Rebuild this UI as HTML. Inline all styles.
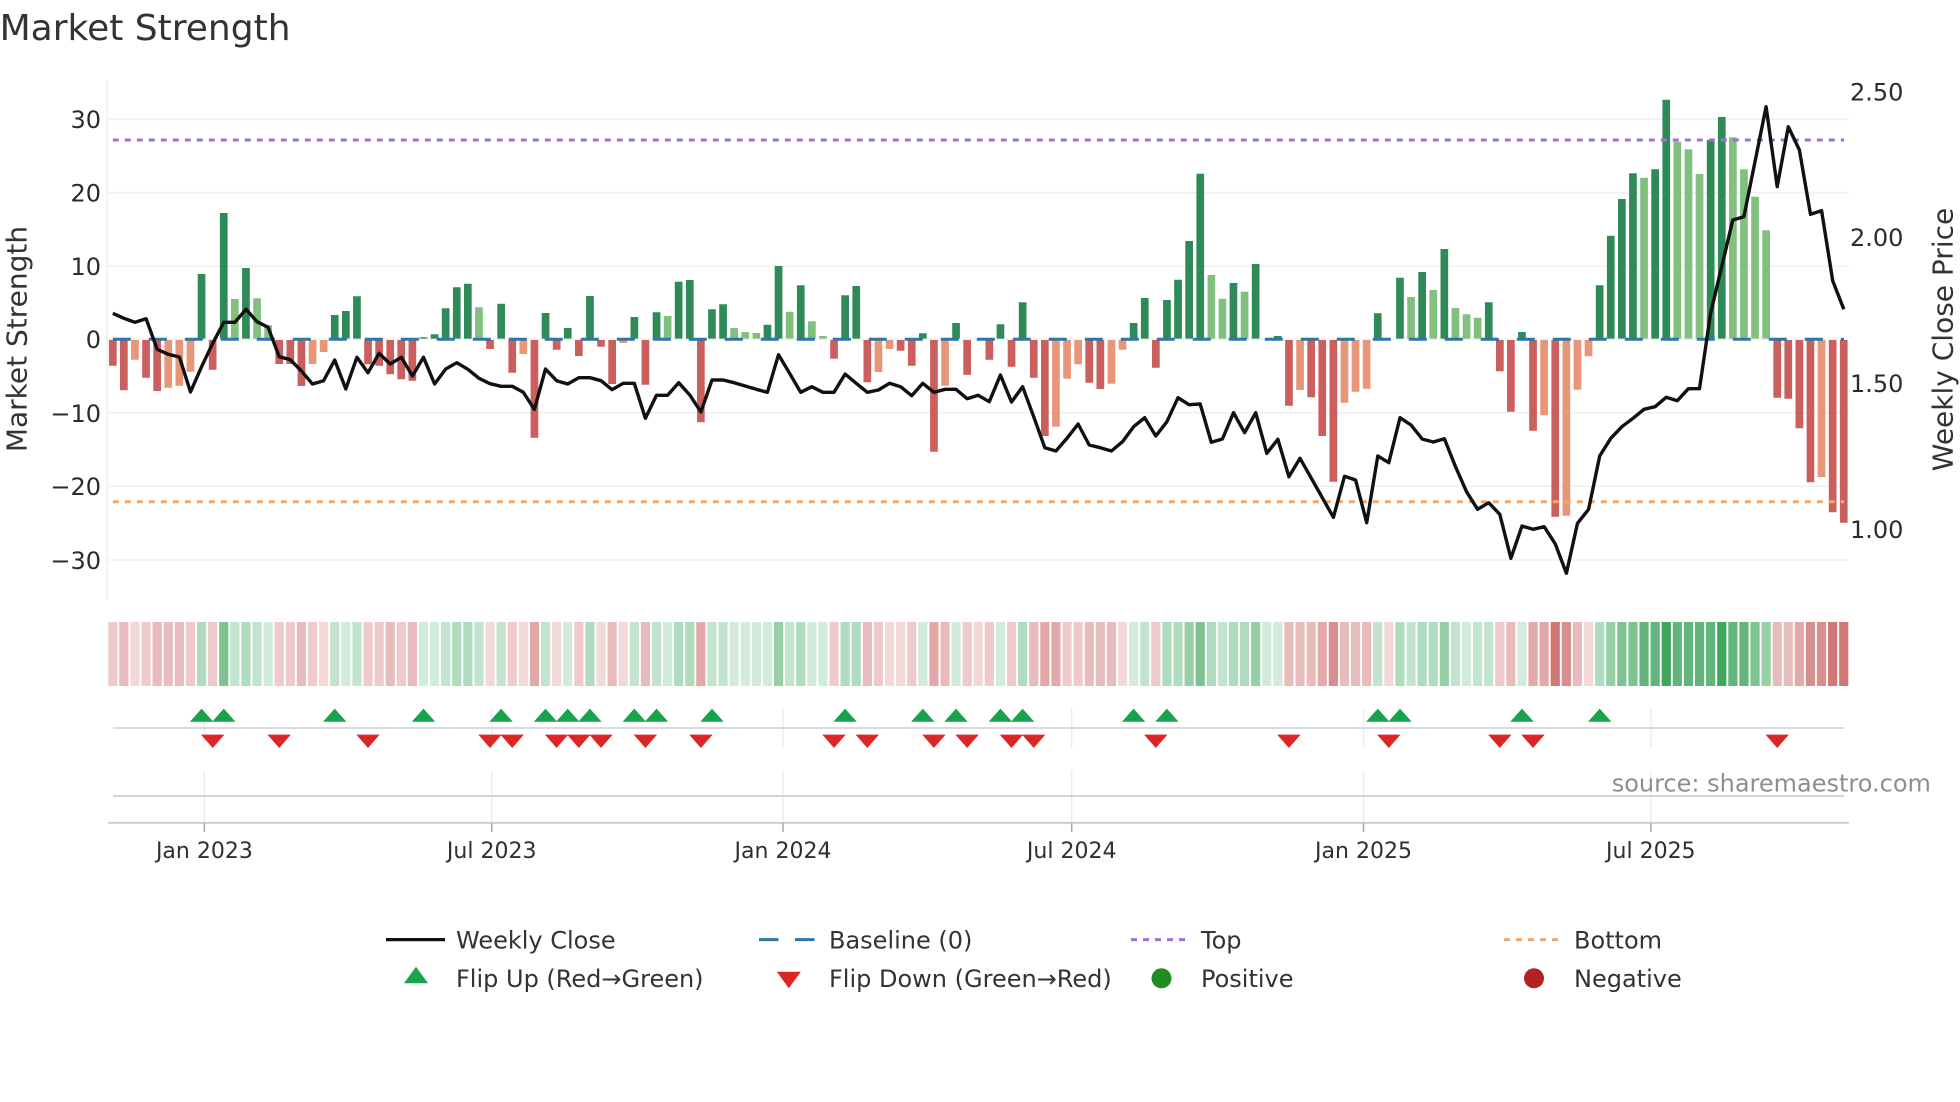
<!DOCTYPE html>
<html lang="en">
<head>
<meta charset="utf-8">
<title>Market Strength</title>
<style>
html,body{margin:0;padding:0;background:#fff;width:1960px;height:1102px;overflow:hidden}
svg{display:block}
text{font-family:"DejaVu Sans","Liberation Sans",sans-serif}
</style>
</head>
<body>
<svg xmlns="http://www.w3.org/2000/svg" width="1960" height="1102" viewBox="0 0 1960 1102">
<rect width="1960" height="1102" fill="#fff"/>

<text x="-0.4" y="40" font-size="36" fill="#333">Market Strength</text>

<!-- grid -->
<path d="M107 119.3H1849M107 192.7H1849M107 266H1849M107 339.3H1849M107 412.7H1849M107 486.3H1849M107 560H1849" stroke="#eef0f3" stroke-width="1.6" fill="none"/>
<path d="M107 80V599" stroke="#eceef1" stroke-width="1.6" fill="none"/>

<!-- y tick labels -->
<g font-size="24" fill="#2b2b2b" text-anchor="end">
<text x="101" y="128">30</text>
<text x="101" y="201.6">20</text>
<text x="101" y="275">10</text>
<text x="101" y="348">0</text>
<text x="101" y="421.8">−10</text>
<text x="101" y="495.2">−20</text>
<text x="101" y="568.8">−30</text>
</g>
<g font-size="24" fill="#2b2b2b">
<text x="1850" y="100.4">2.50</text>
<text x="1850" y="246">2.00</text>
<text x="1850" y="392">1.50</text>
<text x="1850" y="538">1.00</text>
</g>
<text transform="translate(26.5 339) rotate(-90)" font-size="28" fill="#333" text-anchor="middle">Market Strength</text>
<text transform="translate(1952.5 339.5) rotate(-90)" font-size="28" fill="#333" text-anchor="middle">Weekly Close Price</text>

<g transform="translate(3.85 0)" fill="none">
<!-- dark green bars -->
<path stroke="#2e8b57" stroke-width="7.7" d="M197.7 274V338.6M219.9 213V338.6M242.1 268V338.6M330.9 315V338.6M342 311V338.6M353.1 296.3V338.6M419.6 337.3V338.6M430.7 334.3V338.6M441.8 308.3V338.6M452.9 287.3V338.6M464 283.7V338.6M497.3 303.7V338.6M541.7 313V338.6M563.9 328V338.6M586.1 296V338.6M630.5 317V338.6M652.7 312.3V338.6M674.8 281.7V338.6M685.9 280V338.6M708.1 309.3V338.6M719.2 304.3V338.6M763.6 324.7V338.6M774.7 266V338.6M796.9 285.3V338.6M841.3 295.3V338.6M852.4 286V338.6M919 333.3V338.6M952.2 323V338.6M996.6 324.3V338.6M1018.8 302.3V338.6M1129.8 323V338.6M1140.9 298V338.6M1163.1 300V338.6M1174.2 279.7V338.6M1185.3 241V338.6M1196.4 173.7V338.6M1229.6 283V338.6M1251.8 264V338.6M1274 336V338.6M1373.9 313.3V338.6M1396.1 277.7V338.6M1418.3 272V338.6M1440.5 249V338.6M1484.9 302.3V338.6M1518.1 332V338.6M1595.8 285.3V338.6M1606.9 235.7V338.6M1618 199V338.6M1629.1 173.3V338.6M1651.3 169.3V338.6M1662.4 99.7V338.6M1706.8 140V338.6M1717.9 117V338.6"/>
<!-- light green bars -->
<path stroke="#81c07f" stroke-width="7.7" d="M231 299V338.6M253.2 298.3V338.6M264.3 325.3V338.6M475.1 307.3V338.6M663.8 316V338.6M730.3 328V338.6M741.4 332V338.6M752.5 333V338.6M785.8 311.7V338.6M808 321.3V338.6M819.1 336V338.6M1207.5 275V338.6M1218.6 298.7V338.6M1240.7 291.7V338.6M1407.2 297V338.6M1429.4 290V338.6M1451.6 308V338.6M1462.7 314.3V338.6M1473.8 317.7V338.6M1640.2 177.7V338.6M1673.5 141.7V338.6M1684.6 149.3V338.6M1695.7 174V338.6M1729 137.3V338.6M1740.1 169.3V338.6M1751.2 196.7V338.6M1762.3 230.3V338.6"/>
<!-- red bars -->
<path stroke="#cb5f5d" stroke-width="7.7" d="M109 340V365.7M120 340V390.3M142.2 340V377.7M153.3 340V391M208.8 340V369.7M275.4 340V364M286.5 340V364M297.6 340V386M364.2 340V364.3M375.3 340V365.7M386.4 340V374.3M397.4 340V379.3M408.5 340V380.7M486.2 340V349M508.4 340V372.7M530.6 340V437.7M552.8 340V349.7M575 340V356M597.2 340V346.7M608.3 340V384M641.6 340V384.7M697 340V422.3M830.2 340V358.7M863.5 340V382.3M896.8 340V350.7M907.9 340V365.7M930.1 340V451.7M963.3 340V374.7M985.5 340V359.7M1007.7 340V366.7M1029.9 340V377.7M1041 340V436M1085.4 340V382.7M1096.5 340V389M1152 340V367.7M1285.1 340V405.7M1307.3 340V397.3M1318.4 340V436M1329.5 340V481.7M1496 340V371.3M1507 340V411.7M1529.2 340V430.7M1551.4 340V516.7M1773.4 340V397.7M1784.4 340V398.7M1795.5 340V428.3M1806.6 340V482.3M1828.8 340V512.3M1839.9 340V522.7"/>
<!-- salmon bars -->
<path stroke="#e8967a" stroke-width="7.7" d="M131.1 340V359.7M164.4 340V387.7M175.5 340V385.7M186.6 340V371.7M308.7 340V364M319.8 340V352M519.5 340V354M619.4 340V343M874.6 340V372M885.7 340V349M941.2 340V385.7M1052.1 340V426.7M1063.2 340V378.7M1074.3 340V364.3M1107.6 340V383.7M1118.7 340V349.7M1296.2 340V390M1340.6 340V402.7M1351.7 340V391.7M1362.8 340V388.7M1540.3 340V415.3M1562.5 340V515.7M1573.6 340V389.7M1584.7 340V356.3M1817.7 340V477"/>

<!-- heat strip -->
<g stroke-width="9.2">
<path stroke="#f3d8d8" d="M131.1 622v64M319.8 622v64M486.2 622v64M519.5 622v64M552.8 622v64M597.2 622v64M619.4 622v64M885.7 622v64M896.8 622v64M974.4 622v64M1118.7 622v64M1385 622v64M1584.7 622v64"/>
<path stroke="#eecaca" d="M109 622v64M142.2 622v64M186.6 622v64M208.8 622v64M275.4 622v64M286.5 622v64M308.7 622v64M364.2 622v64M375.3 622v64M397.4 622v64M508.4 622v64M575 622v64M830.2 622v64M874.6 622v64M907.9 622v64M963.3 622v64M985.5 622v64M1007.7 622v64M1063.2 622v64M1074.3 622v64M1152 622v64M1496 622v64"/>
<path stroke="#e9bcbc" d="M120 622v64M153.3 622v64M164.4 622v64M175.5 622v64M297.6 622v64M386.4 622v64M408.5 622v64M608.3 622v64M641.6 622v64M863.5 622v64M941.2 622v64M1029.9 622v64M1085.4 622v64M1096.5 622v64M1107.6 622v64M1285.1 622v64M1296.2 622v64M1307.3 622v64M1340.6 622v64M1351.7 622v64M1362.8 622v64M1507 622v64M1573.6 622v64M1773.4 622v64M1784.4 622v64"/>
<path stroke="#e3a8a8" d="M530.6 622v64M697 622v64M930.1 622v64M1041 622v64M1052.1 622v64M1318.4 622v64M1529.2 622v64M1540.3 622v64M1795.5 622v64"/>
<path stroke="#d88e8c" d="M1329.5 622v64M1562.5 622v64M1806.6 622v64M1817.7 622v64"/>
<path stroke="#cf7876" d="M1551.4 622v64M1828.8 622v64M1839.9 622v64"/>
<path stroke="#d2ebdc" d="M264.3 622v64M342 622v64M419.6 622v64M430.7 622v64M563.9 622v64M663.8 622v64M730.3 622v64M741.4 622v64M752.5 622v64M763.6 622v64M808 622v64M819.1 622v64M919 622v64M952.2 622v64M996.6 622v64M1129.8 622v64M1262.9 622v64M1274 622v64M1462.7 622v64M1518.1 622v64"/>
<path stroke="#c2e4ce" d="M231 622v64M253.2 622v64M330.9 622v64M353.1 622v64M441.8 622v64M475.1 622v64M497.3 622v64M541.7 622v64M630.5 622v64M652.7 622v64M708.1 622v64M719.2 622v64M785.8 622v64M1140.9 622v64M1218.6 622v64M1373.9 622v64M1407.2 622v64M1451.6 622v64M1473.8 622v64M1484.9 622v64"/>
<path stroke="#afdcbc" d="M197.7 622v64M242.1 622v64M452.9 622v64M464 622v64M586.1 622v64M674.8 622v64M685.9 622v64M796.9 622v64M841.3 622v64M852.4 622v64M1018.8 622v64M1163.1 622v64M1174.2 622v64M1207.5 622v64M1229.6 622v64M1240.7 622v64M1396.1 622v64M1418.3 622v64M1429.4 622v64M1595.8 622v64"/>
<path stroke="#97d0a7" d="M774.7 622v64M1185.3 622v64M1251.8 622v64M1440.5 622v64M1606.9 622v64M1762.3 622v64"/>
<path stroke="#7cc391" d="M219.9 622v64M1196.4 622v64M1618 622v64M1629.1 622v64M1751.2 622v64"/>
<path stroke="#62b67d" d="M1640.2 622v64M1651.3 622v64M1673.5 622v64M1684.6 622v64M1695.7 622v64M1706.8 622v64M1729 622v64M1740.1 622v64"/>
<path stroke="#3ea75d" d="M1662.4 622v64M1717.9 622v64"/>
</g>
</g>

<!-- baseline and thresholds -->
<path d="M112.8 339.3H1844" stroke="#2e75a8" stroke-width="3" stroke-dasharray="18 18" fill="none"/>
<path d="M112.8 140H1844" stroke="#9f6fdc" stroke-width="3" stroke-dasharray="6 6" fill="none"/>
<path d="M112.8 501.7H1844" stroke="#f2a76a" stroke-width="3" stroke-dasharray="6 6" fill="none"/>

<!-- weekly close -->
<polyline fill="none" stroke="#111" stroke-width="3.4" stroke-linejoin="round" points="112.8,313.3 123.9,318.3 135,322.3 146.1,318.7 157.2,349.3 168.3,354.3 179.4,357 190.5,392 201.6,366.7 212.7,343.3 223.8,322.3 234.9,322.3 246,309.3 257,321.7 268.1,327.3 279.2,356.7 290.3,359.7 301.4,371 312.5,384 323.6,380.7 334.7,360 345.8,389 356.9,357.3 368,372.7 379.1,353.3 390.2,364 401.3,357.3 412.4,376 423.5,357.3 434.6,384 445.7,369 456.8,362.7 467.9,369.3 479,378.3 490,383.7 501.1,386.3 512.2,386.3 523.3,392.3 534.4,409.3 545.5,369 556.6,380.7 567.7,384 578.8,377.7 589.9,377.7 601,380.7 612.1,389.7 623.2,383.3 634.3,383.3 645.4,418.3 656.5,395.3 667.6,395.3 678.7,382.7 689.8,395 700.9,412 712,380 723,380 734.1,382.7 745.2,386 756.3,389.3 767.4,392.3 778.5,354.7 789.6,373.3 800.7,392.3 811.8,386.7 822.9,392.3 834,392.3 845.1,374 856.2,383.3 867.3,392.3 878.4,390 889.5,383.3 900.6,386.7 911.7,395.7 922.8,383.3 933.9,392.3 945,389.3 956,389.3 967.1,398.7 978.2,395.3 989.3,401.7 1000.4,375 1011.5,402 1022.6,386.7 1033.7,416.7 1044.8,447.7 1055.9,451 1067,438.3 1078.1,424 1089.2,445 1100.3,447.7 1111.4,451 1122.5,441.7 1133.6,426.7 1144.7,417.7 1155.8,436 1166.9,421.7 1178,397.7 1189,404.7 1200.2,404 1211.3,442.3 1222.4,439 1233.5,412.7 1244.6,432.7 1255.7,412.7 1266.8,453.3 1277.9,439.3 1288.9,476.7 1300,458.3 1311.2,478 1322.3,497.7 1333.4,517.3 1344.5,476.3 1355.6,480 1366.7,522.7 1377.8,456 1388.8,462.7 1400,417.7 1411,425 1422.2,439 1433.3,442 1444.4,438.7 1455.5,466.7 1466.5,491.7 1477.6,509.3 1488.7,502.7 1499.8,514.3 1510.9,558.3 1522,526 1533,529.3 1544.2,526.7 1555.3,544 1566.4,573.3 1577.5,523.3 1588.6,509.3 1599.7,456 1610.8,438.3 1621.9,426.7 1633,418.3 1644,409.3 1655.1,406.7 1666.2,397.3 1677.3,400.7 1688.4,388.7 1699.5,388.7 1710.6,313.3 1721.7,266.7 1732.8,220 1743.9,216.7 1755,161.7 1766.1,106.7 1777.2,186.7 1788.3,126.7 1799.4,150 1810.5,214.3 1821.6,210.7 1832.7,280.7 1843.8,309.3"/>

<!-- lower panel guides -->
<path d="M204.4 708V748M204.4 770V823M491.7 708V748M491.7 770V823M783 708V748M783 770V823M1071.7 708V748M1071.7 770V823M1363.5 708V748M1363.5 770V823M1650.8 708V748M1650.8 770V823" stroke="#e9ecf0" stroke-width="1.3" fill="none"/>
<path d="M113 728H1844" stroke="#d3d6da" stroke-width="1.8" fill="none"/>
<path d="M113 796H1844" stroke="#cfcfcf" stroke-width="1.8" fill="none"/>
<path d="M108 822.8H1849" stroke="#cccccc" stroke-width="1.8" fill="none"/>
<path d="M204.4 823V832M491.7 823V832M783 823V832M1071.7 823V832M1363.5 823V832M1650.8 823V832" stroke="#a6a6a6" stroke-width="1.5" fill="none"/>

<!-- flip markers -->
<path fill="#16a34a" d="M201.6 708.6l11.7 13.2h-23.4zM223.8 708.6l11.7 13.2h-23.4zM334.7 708.6l11.7 13.2h-23.4zM423.5 708.6l11.7 13.2h-23.4zM501.1 708.6l11.7 13.2h-23.4zM545.5 708.6l11.7 13.2h-23.4zM567.7 708.6l11.7 13.2h-23.4zM589.9 708.6l11.7 13.2h-23.4zM634.3 708.6l11.7 13.2h-23.4zM656.5 708.6l11.7 13.2h-23.4zM712 708.6l11.7 13.2h-23.4zM845.1 708.6l11.7 13.2h-23.4zM922.8 708.6l11.7 13.2h-23.4zM956 708.6l11.7 13.2h-23.4zM1000.4 708.6l11.7 13.2h-23.4zM1022.6 708.6l11.7 13.2h-23.4zM1133.6 708.6l11.7 13.2h-23.4zM1166.9 708.6l11.7 13.2h-23.4zM1377.8 708.6l11.7 13.2h-23.4zM1400 708.6l11.7 13.2h-23.4zM1522 708.6l11.7 13.2h-23.4zM1599.7 708.6l11.7 13.2h-23.4z"/>
<path fill="#dc2626" d="M212.7 748l-11.7-13.4h23.4zM279.2 748l-11.7-13.4h23.4zM368 748l-11.7-13.4h23.4zM490 748l-11.7-13.4h23.4zM512.2 748l-11.7-13.4h23.4zM556.6 748l-11.7-13.4h23.4zM578.8 748l-11.7-13.4h23.4zM601 748l-11.7-13.4h23.4zM645.4 748l-11.7-13.4h23.4zM700.9 748l-11.7-13.4h23.4zM834 748l-11.7-13.4h23.4zM867.3 748l-11.7-13.4h23.4zM933.9 748l-11.7-13.4h23.4zM967.1 748l-11.7-13.4h23.4zM1011.5 748l-11.7-13.4h23.4zM1033.7 748l-11.7-13.4h23.4zM1155.8 748l-11.7-13.4h23.4zM1288.9 748l-11.7-13.4h23.4zM1388.8 748l-11.7-13.4h23.4zM1499.8 748l-11.7-13.4h23.4zM1533 748l-11.7-13.4h23.4zM1777.2 748l-11.7-13.4h23.4z"/>

<text x="1611.7" y="791.7" font-size="24" fill="#8e8e8e">source: sharemaestro.com</text>

<!-- x tick labels -->
<g font-size="22" fill="#2f2f2f" text-anchor="middle">
<text x="204.4" y="858">Jan 2023</text>
<text x="491.7" y="858">Jul 2023</text>
<text x="783" y="858">Jan 2024</text>
<text x="1071.7" y="858">Jul 2024</text>
<text x="1363.5" y="858">Jan 2025</text>
<text x="1650.8" y="858">Jul 2025</text>
</g>

<!-- legend -->
<path d="M386 939.6H445" stroke="#111" stroke-width="3.2" fill="none"/>
<path d="M759 939.6H778.5M795 939.6H814.5" stroke="#2e75a8" stroke-width="3" fill="none"/>
<path d="M1131 939.6H1186" stroke="#9f6fdc" stroke-width="3" stroke-dasharray="6 6" fill="none"/>
<path d="M1504 939.6H1560" stroke="#f2a76a" stroke-width="3" stroke-dasharray="6 6" fill="none"/>
<path d="M416 966.7l12 16.6h-24z" fill="#16a34a"/>
<path d="M788.8 988.3l-12-16.6h24z" fill="#dc2626"/>
<circle cx="1161.5" cy="978.3" r="10" fill="#228b22"/>
<circle cx="1534" cy="978.3" r="10" fill="#b22222"/>
<g font-size="24" fill="#333">
<text x="456" y="948.5">Weekly Close</text>
<text x="829" y="948.5">Baseline (0)</text>
<text x="1201" y="948.5">Top</text>
<text x="1574" y="948.5">Bottom</text>
<text x="456" y="987">Flip Up (Red→Green)</text>
<text x="829" y="987">Flip Down (Green→Red)</text>
<text x="1201" y="987">Positive</text>
<text x="1574" y="987">Negative</text>
</g>
</svg>
</body>
</html>
